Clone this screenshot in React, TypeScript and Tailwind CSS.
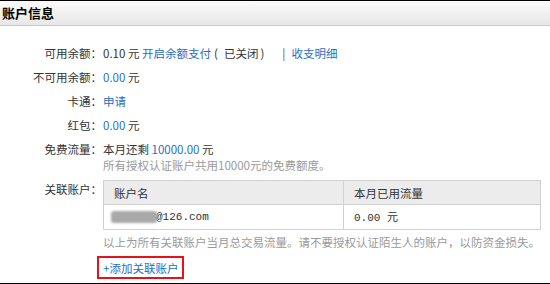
import React from "react";

const font = "font-['SimSun','Noto_Sans_CJK_SC',sans-serif]";

type RowProps = { label: string; children: React.ReactNode };

function Row({ label, children }: RowProps) {
  return (
    <div className="flex py-[4px] leading-[16px]">
      <div className="w-[102px] shrink-0 text-right">{label}：</div>
      <div className="pl-[1px]">{children}</div>
    </div>
  );
}

const Link = ({ children }: { children: React.ReactNode }) => (
  <span className="text-[#1f6fc5]">{children}</span>
);

export default function App() {
  return (
    <div
      className={`h-[284px] w-[550px] overflow-hidden border-y border-black bg-white text-[11.5px] text-[#333] ${font}`}
    >
      <div className="flex h-[25px] items-center border-b border-[#c9c9c9] bg-gradient-to-b from-[#fbfbfb] to-[#e7e7e7] px-[2px] text-[13px] font-bold text-black">
        账户信息
      </div>

      <div className="pt-[15px]">
        <Row label="可用余额">
          0.10 元 <Link>开启余额支付</Link>
          <span className="ml-[3px]">(</span>
          <span className="ml-[6px]">已关闭</span>
          <span className="ml-[2px]">)</span>
          <span className="ml-[18px] mr-[6px] text-[#555]">|</span>
          <Link>收支明细</Link>
        </Row>
        <Row label="不可用余额">
          <Link>0.00</Link> 元
        </Row>
        <Row label="卡通">
          <Link>申请</Link>
        </Row>
        <Row label="红包">
          <Link>0.00</Link> 元
        </Row>
        <Row label="免费流量">
          <div>
            本月还剩 <Link>10000.00</Link> 元
          </div>
          <div className="text-[#9a9a9a]">所有授权认证账户共用10000元的免费额度。</div>
        </Row>

        <div className="mt-[3px] flex leading-[16px]">
          <div className="w-[102px] shrink-0 pt-[1px] text-right">关联账户：</div>
          <div className="pl-[1px]">
            <table className="w-[438px] border-collapse border border-[#d2d2d2]">
              <thead>
                <tr className="h-[24px] bg-[#ececec]">
                  <th className="w-[240px] border border-[#d2d2d2] px-[10px] text-left font-normal">
                    账户名
                  </th>
                  <th className="border border-[#d2d2d2] px-[10px] text-left font-normal">
                    本月已用流量
                  </th>
                </tr>
              </thead>
              <tbody>
                <tr className="h-[25px]">
                  <td className="border border-[#d2d2d2] pl-[7px]">
                    <div className="flex items-center">
                      <div className="h-[12px] w-[46px] rounded-[3px] bg-[#a9a9a9] blur-[1px]" />
                      <span className="-ml-[1px] font-['Liberation_Mono',monospace] text-[11px]">
                        @126.com
                      </span>
                    </div>
                  </td>
                  <td className="border border-[#d2d2d2] px-[10px] font-['Liberation_Mono',monospace] text-[11px]">
                    0.00 <span className={font}>元</span>
                  </td>
                </tr>
              </tbody>
            </table>
            <div className="mt-[4px] whitespace-nowrap text-[#9a9a9a]">
              以上为所有关联账户当月总交易流量。请不要授权认证陌生人的账户，以防资金损失。
            </div>
            <div className="-ml-[6px] mt-[6px] inline-flex h-[23px] items-center border-2 border-[#e3121b] px-[4px] text-[#1f6fc5]">
              +添加关联账户
            </div>
          </div>
        </div>
      </div>
    </div>
  );
}
